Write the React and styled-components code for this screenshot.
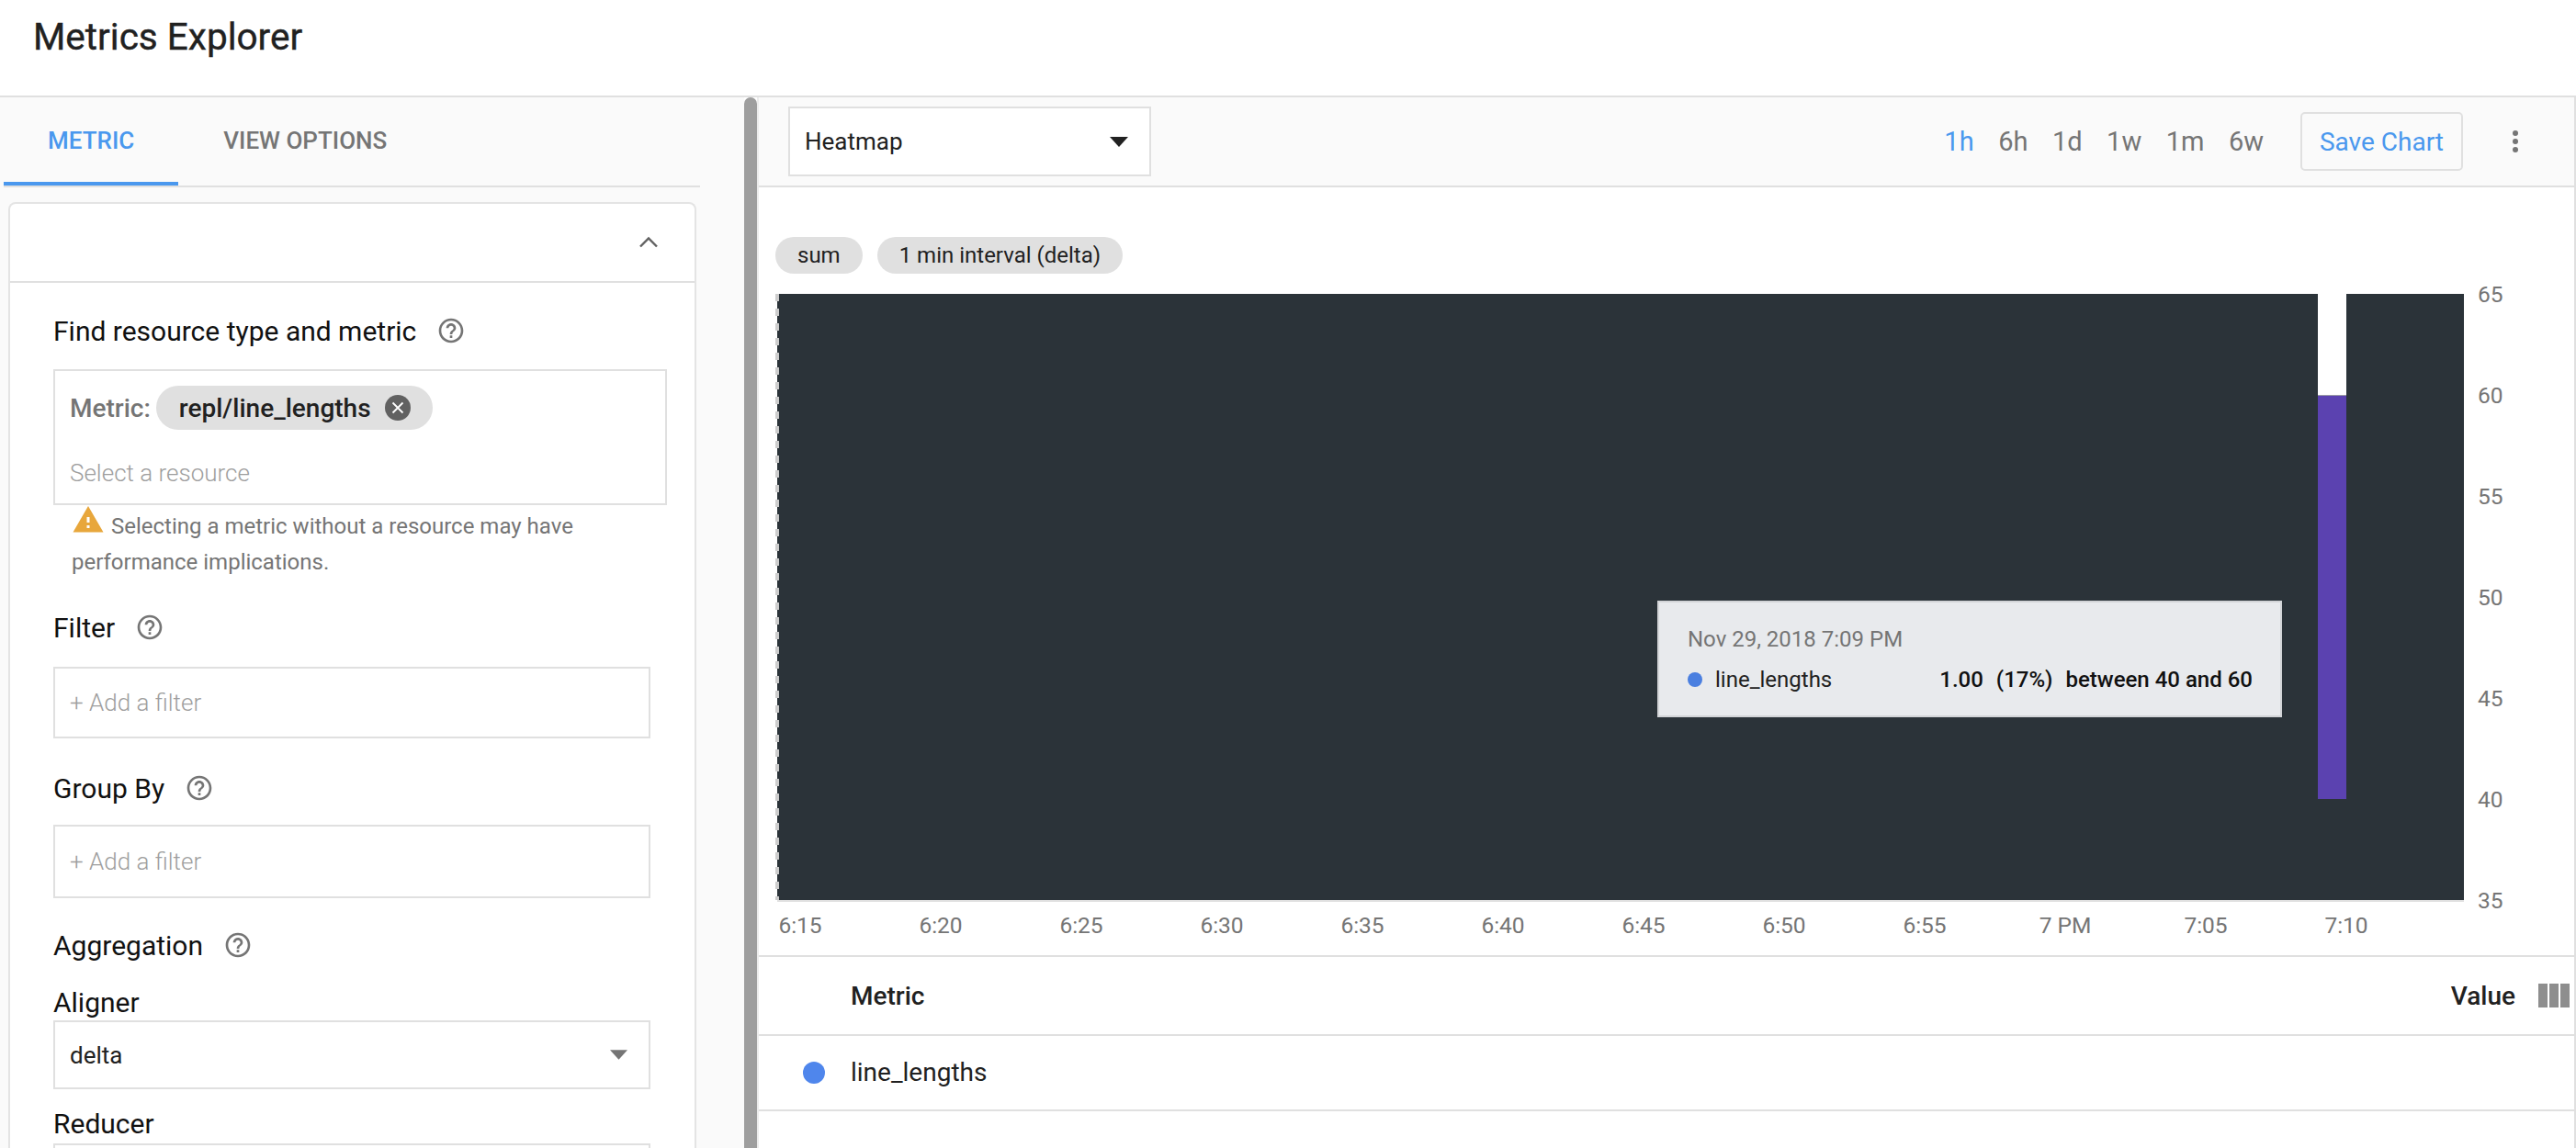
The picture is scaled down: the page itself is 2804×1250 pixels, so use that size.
import React from 'react'
import styled, { createGlobalStyle } from 'styled-components'

const GlobalStyle = createGlobalStyle`
  html, body {
    margin: 0;
    height: 100%;
    overflow: hidden;
    background: #fff;
    font-family: Roboto, "Liberation Sans", sans-serif;
    color: #212121;
  }
  * { box-sizing: border-box; }
`

//#region page
const Page = styled.div`
  width: 2804px;
  height: 1250px;
  display: flex;
  flex-direction: column;
  overflow: hidden;
`
const TopBar = styled.header`
  height: 106px;
  flex: none;
  padding: 17px 0 0 36px;
  border-bottom: 2px solid #e0e0e0;
`
const Title = styled.h1`
  margin: 0;
  font-size: 40.5px;
  line-height: 46px;
  font-weight: 400;
  color: #212121;
  -webkit-text-stroke: 0.4px #212121;
`
const Main = styled.div`
  flex: 1;
  min-height: 0;
  display: flex;
`
//#endregion

//#region left panel
const LeftPanel = styled.aside`
  width: 810px;
  flex: none;
  background: #fafafa;
  overflow: hidden;
`
const Tabs = styled.div`
  height: 98px;
  width: 758px;
  margin-left: 4px;
  display: flex;
  gap: 1px;
  border-bottom: 2px solid #e0e0e0;
`
const Tab = styled.div`
  height: 96px;
  padding: 2px 48px 0;
  display: flex;
  align-items: center;
  font-size: 26px;
  font-weight: 500;
  color: ${(p) => (p.$active ? '#4a98ee' : '#757575')};
  border-bottom: 4px solid ${(p) => (p.$active ? '#4a98ee' : 'transparent')};
`
const Card = styled.section`
  width: 749px;
  margin: 16px 0 0 9px;
  background: #fff;
  border: 2px solid #e4e4e4;
  border-bottom: 0;
  border-radius: 8px 8px 0 0;
`
const CardHeader = styled.div`
  height: 86px;
  display: flex;
  align-items: center;
  justify-content: flex-end;
  padding-right: 32px;
  border-bottom: 2px solid #e0e0e0;
`
const CardBody = styled.div`
  padding: 34px 0 0 47px;
`
const Label = styled.div`
  display: flex;
  align-items: center;
  gap: ${(p) => p.$gap || 0}px;
  height: 36px;
  margin-top: ${(p) => p.$top || 0}px;
  font-size: 30px;
  color: #111;
`
const ResourceBox = styled.div`
  width: 668px;
  height: 148px;
  margin-top: 24px;
  padding: 16px 16px 0;
  border: 2px solid #e0e0e0;
`
const ChipRow = styled.div`
  display: flex;
  align-items: center;
  gap: 6px;
`
const ChipLabel = styled.span`
  font-size: 28px;
  font-weight: 500;
  color: #757575;
`
const MetricChip = styled.span`
  height: 48px;
  padding: 0 24px 0 25px;
  display: inline-flex;
  align-items: center;
  gap: 15px;
  border-radius: 24px;
  background: #e0e0e0;
  font-size: 28px;
  font-weight: 500;
  color: #212121;
`
const Placeholder = styled.div`
  margin-top: ${(p) => p.$top || 0}px;
  font-size: 26px;
  font-weight: 300;
  line-height: 34px;
  color: #9e9e9e;
`
const Warning = styled.div`
  width: 600px;
  margin-top: -2px;
  padding: 0 0 0 20px;
  font-size: 24px;
  line-height: 39px;
  color: #757575;

  > svg {
    vertical-align: -3px;
    margin-right: 7px;
  }
`
const Field = styled.div`
  width: 650px;
  height: ${(p) => p.$h}px;
  margin-top: ${(p) => p.$top || 0}px;
  padding: 0 23px 0 16px;
  display: flex;
  align-items: center;
  justify-content: space-between;
  border: 2px solid #e0e0e0;
  font-size: 26px;
  color: #212121;
`
//#endregion

const Splitter = styled.div`
  width: 14px;
  flex: none;
  background: #9e9e9e;
  border-radius: 7px 7px 0 0;
`

//#region right panel
const RightPanel = styled.main`
  flex: 1;
  min-width: 0;
  border-left: 2px solid #ececec;
  border-right: 2px solid #e0e0e0;
`
const Toolbar = styled.div`
  height: 98px;
  padding: 10px 61px 0 32px;
  display: flex;
  align-items: flex-start;
  justify-content: space-between;
  background: #fafafa;
  border-bottom: 2px solid #e0e0e0;
`
const ChartTypeSelect = styled.div`
  width: 395px;
  height: 76px;
  padding: 0 23px 0 16px;
  display: flex;
  align-items: center;
  justify-content: space-between;
  background: #fff;
  border: 2px solid #e0e0e0;
  font-size: 26px;
  color: #212121;
`
const ToolbarRight = styled.div`
  display: flex;
  align-items: center;
  height: 76px;
`
const TimeRanges = styled.div`
  display: flex;
  gap: 26.5px;
  margin-right: 40px;
`
const TimeRange = styled.span`
  font-size: 29px;
  color: ${(p) => (p.$active ? '#4a98ee' : '#757575')};
`
const SaveButton = styled.button`
  width: 177px;
  height: 64px;
  margin: 0 54px 0 0;
  padding: 0;
  background: #fafafa;
  border: 2px solid #e0e0e0;
  border-radius: 5px;
  font-family: inherit;
  font-size: 28px;
  color: #4a98ee;
`
const ChartArea = styled.div`
  height: 836px;
  padding: 54px 0 0 18px;
`
const Chips = styled.div`
  display: flex;
  gap: 16px;
  height: 40px;
`
const Chip = styled.span`
  height: 40px;
  padding: 0 24px;
  display: inline-flex;
  align-items: center;
  border-radius: 20px;
  background: #e0e0e0;
  font-size: 24px;
  color: #212121;
`
const ChartRow = styled.div`
  height: 662px;
  margin: 22px 0 0 2px;
  display: flex;
  gap: 15px;
`
const Plot = styled.div`
  position: relative;
  width: 1836px;
  height: 662px;
  flex: none;
  background: #2b3339;
  border-bottom: 2px solid #e0e0e0;
`
const StartMarker = styled.div`
  position: absolute;
  left: -2px;
  top: 0;
  bottom: 0;
  width: 4px;
  background: repeating-linear-gradient(to bottom, #cdcdcd 0 8px, transparent 8px 16px);
`
const Bar = styled.div`
  position: absolute;
  left: ${(p) => p.$left}px;
  top: 0;
  width: 31px;
  display: flex;
  flex-direction: column;
`
const BarCell = styled.div`
  height: ${(p) => p.$h}px;
  background: ${(p) => p.$color};
`
const Tooltip = styled.div`
  position: absolute;
  left: 958px;
  top: 334px;
  width: 680px;
  height: 127px;
  padding: 25px 30px 0 31px;
  background: #e8eaed;
  border: 2px solid #d2d4d7;
`
const TooltipDate = styled.div`
  font-size: 24px;
  line-height: 30px;
  color: #757575;
`
const TooltipRow = styled.div`
  margin-top: 14px;
  display: flex;
  align-items: center;
  font-size: 24px;
  line-height: 30px;
  color: #212121;
`
const TooltipValues = styled.div`
  margin-left: auto;
  display: flex;
  gap: 14px;
  font-weight: 500;
  color: #111;
`
const Dot = styled.span`
  width: ${(p) => p.$size}px;
  height: ${(p) => p.$size}px;
  margin-right: ${(p) => p.$gap}px;
  flex: none;
  border-radius: 50%;
  background: ${(p) => p.$color};
`
const YAxis = styled.div`
  margin-top: -14px;
  display: flex;
  flex-direction: column;
  gap: 80px;
`
const AxisLabel = styled.span`
  height: 30px;
  font-size: 24.5px;
  line-height: 30px;
  color: #757575;
`
const XAxis = styled.div`
  margin-top: 11px;
  padding-left: 4px;
  display: flex;
  gap: 107px;
`
const XTick = styled(AxisLabel)`
  width: 46px;
  display: flex;
  justify-content: center;
  white-space: nowrap;
`
const TableRow = styled.div`
  height: ${(p) => p.$h}px;
  padding: 0 5px 0 ${(p) => p.$pad}px;
  display: flex;
  align-items: center;
  border-top: ${(p) => (p.$first ? '2px solid #e0e0e0' : '0')};
  border-bottom: 2px solid #e0e0e0;
  font-size: 28px;
  font-weight: ${(p) => p.$weight || 400};
  color: #212121;
`
const ValueHeader = styled.div`
  margin-left: auto;
  display: flex;
  align-items: center;
  gap: 25px;
`
const RowDot = styled(Dot)`
  margin-top: -1px;
`
const RowText = styled.span`
  margin-top: -2px;
`
//#endregion

const HelpIcon = () => (
  <svg width="32" height="32" viewBox="0 0 24 24" fill="#757575">
    <path d="M11 18h2v-2h-2v2zm1-16C6.48 2 2 6.48 2 12s4.48 10 10 10 10-4.48 10-10S17.52 2 12 2zm0 18c-4.41 0-8-3.59-8-8s3.59-8 8-8 8 3.59 8 8-3.59 8-8 8zm0-14c-2.21 0-4 1.79-4 4h2c0-1.1.9-2 2-2s2 .9 2 2c0 2-3 1.75-3 5h2c0-2.25 3-2.5 3-5 0-2.21-1.79-4-4-4z" />
  </svg>
)

const Triangle = ({ color, width = 20, height = 11 }) => (
  <svg width={width} height={height} viewBox="0 0 20 11">
    <path d="M0 0h20L10 11z" fill={color} />
  </svg>
)

const xTicks = ['6:15', '6:20', '6:25', '6:30', '6:35', '6:40', '6:45', '6:50', '6:55', '7 PM', '7:05', '7:10']
const yTicks = [65, 60, 55, 50, 45, 40, 35]
const ranges = ['1h', '6h', '1d', '1w', '1m', '6w']

export default function App() {
  return (
    <Page>
      <GlobalStyle />
      <TopBar>
        <Title>Metrics Explorer</Title>
      </TopBar>
      <Main>
        <LeftPanel>
          <Tabs>
            <Tab $active>METRIC</Tab>
            <Tab>VIEW OPTIONS</Tab>
          </Tabs>
          <Card>
            <CardHeader>
              <svg width="36" height="36" viewBox="0 0 24 24" fill="none" stroke="#616161" strokeWidth="1.6">
                <path d="M6 15l6-6 6 6" />
              </svg>
            </CardHeader>
            <CardBody>
              <Label $gap={22}>
                Find resource type and metric <HelpIcon />
              </Label>
              <ResourceBox>
                <ChipRow>
                  <ChipLabel>Metric:</ChipLabel>
                  <MetricChip>
                    repl/line_lengths
                    <svg width="28" height="28" viewBox="0 0 28 28">
                      <circle cx="14" cy="14" r="14" fill="#616161" />
                      <path d="M8.5 8.5l11 11M19.5 8.5l-11 11" stroke="#fff" strokeWidth="1.8" />
                    </svg>
                  </MetricChip>
                </ChipRow>
                <Placeholder $top={30}>Select a resource</Placeholder>
              </ResourceBox>
              <Warning>
                <svg width="36" height="36" viewBox="0 0 24 24" fill="#e8a73c">
                  <path d="M1 21h22L12 2 1 21zm12-3h-2v-2h2v2zm0-4h-2v-4h2v4z" />
                </svg>
                Selecting a metric without a resource may have performance implications.
              </Warning>
              <Label $top={33} $gap={22}>
                Filter <HelpIcon />
              </Label>
              <Field $h={78} $top={25}>
                <Placeholder>+ Add a filter</Placeholder>
              </Field>
              <Label $top={36} $gap={22}>
                Group By <HelpIcon />
              </Label>
              <Field $h={80} $top={22}>
                <Placeholder>+ Add a filter</Placeholder>
              </Field>
              <Label $top={33} $gap={22}>
                Aggregation <HelpIcon />
              </Label>
              <Label $top={26}>Aligner</Label>
              <Field $h={75} $top={2}>
                delta
                <Triangle color="#757575" width={19} />
              </Field>
              <Label $top={19}>Reducer</Label>
              <Field $h={75} $top={4} />
            </CardBody>
          </Card>
        </LeftPanel>
        <Splitter />
        <RightPanel>
          <Toolbar>
            <ChartTypeSelect>
              Heatmap
              <Triangle color="#212121" />
            </ChartTypeSelect>
            <ToolbarRight>
              <TimeRanges>
                {ranges.map((r, i) => (
                  <TimeRange key={r} $active={i === 0}>
                    {r}
                  </TimeRange>
                ))}
              </TimeRanges>
              <SaveButton>Save Chart</SaveButton>
              <svg width="6" height="24" viewBox="0 0 6 24" fill="#757575">
                <circle cx="3" cy="3" r="3" />
                <circle cx="3" cy="12" r="3" />
                <circle cx="3" cy="21" r="3" />
              </svg>
            </ToolbarRight>
          </Toolbar>
          <ChartArea>
            <Chips>
              <Chip>sum</Chip>
              <Chip>1 min interval (delta)</Chip>
            </Chips>
            <ChartRow>
              <Plot>
                <StartMarker />
                <Bar $left={1677}>
                  <BarCell $h={110} $color="#ffffff" />
                  <BarCell $h={1} $color="#9a9aa5" />
                  <BarCell $h={439} $color="#5b42b0" />
                </Bar>
                <Tooltip>
                  <TooltipDate>Nov 29, 2018 7:09 PM</TooltipDate>
                  <TooltipRow>
                    <Dot $size={16} $gap={14} $color="#4a7fe0" />
                    line_lengths
                    <TooltipValues>
                      <span>1.00</span>
                      <span>(17%)</span>
                      <span>between 40 and 60</span>
                    </TooltipValues>
                  </TooltipRow>
                </Tooltip>
              </Plot>
              <YAxis>
                {yTicks.map((t) => (
                  <AxisLabel key={t}>{t}</AxisLabel>
                ))}
              </YAxis>
            </ChartRow>
            <XAxis>
              {xTicks.map((t) => (
                <XTick key={t}>{t}</XTick>
              ))}
            </XAxis>
          </ChartArea>
          <TableRow $h={88} $pad={100} $weight={500} $first>
            Metric
            <ValueHeader>
              Value
              <svg width="34" height="26" viewBox="0 0 34 26" fill="#8e8e8e">
                <rect width="10" height="26" />
                <rect x="12" width="10" height="26" />
                <rect x="24" width="10" height="26" />
              </svg>
            </ValueHeader>
          </TableRow>
          <TableRow $h={82} $pad={48}>
            <RowDot $size={24} $gap={28} $color="#4f86ec" />
            <RowText>line_lengths</RowText>
          </TableRow>
        </RightPanel>
      </Main>
    </Page>
  )
}
